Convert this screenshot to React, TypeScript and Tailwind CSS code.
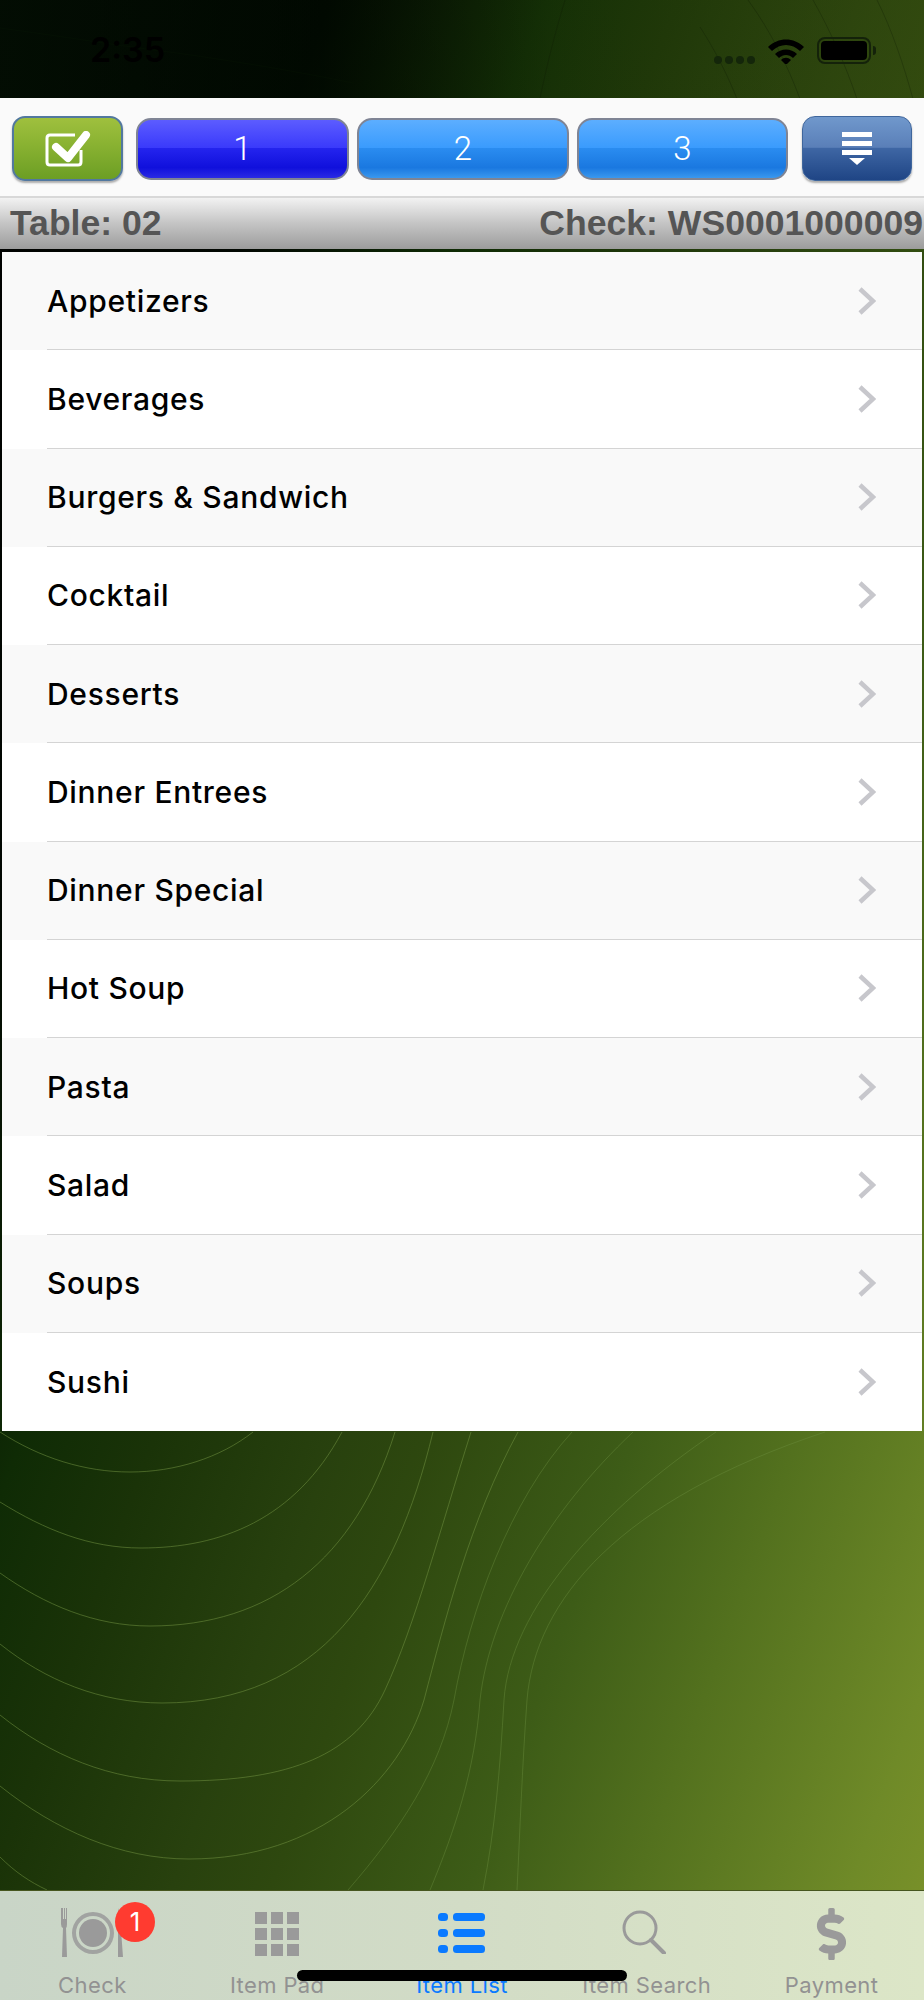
import React from "react";
import { FaDollarSign } from "react-icons/fa";

const categories = [
    "Appetizers",
    "Beverages",
    "Burgers & Sandwich",
    "Cocktail",
    "Desserts",
    "Dinner Entrees",
    "Dinner Special",
    "Hot Soup",
    "Pasta",
    "Salad",
    "Soups",
    "Sushi",
];

// contour lines of the wallpaper
const lowerLines = [
    "M0 1432 C40 1458 85 1472 130 1472 C175 1472 220 1458 253 1432",
    "M0 1502 C45 1530 90 1548 141 1548 C220 1548 295 1520 342 1432",
    "M0 1573 C45 1605 95 1626 150 1626 C270 1626 355 1560 395 1432",
    "M0 1644 C45 1680 100 1703 162 1703 C320 1703 395 1590 433 1432",
    "M0 1715 C50 1755 110 1781 180 1781 C290 1781 355 1755 385 1690 C415 1625 440 1530 471 1432",
    "M0 1786 C55 1830 120 1859 189 1859 C320 1859 400 1780 424 1700 C445 1620 470 1520 518 1432",
    "M0 1857 C15 1872 30 1882 47 1890",
];

const outerLines = [
    "M348 1890 C400 1830 440 1770 454 1700 C470 1610 510 1500 572 1432",
    "M430 1890 C455 1830 475 1770 480 1700 C490 1610 550 1510 633 1432",
    "M483 1890 C495 1830 500 1770 504 1700 C510 1610 600 1510 716 1432",
    "M517 1890 C520 1830 522 1770 527 1700 C535 1600 620 1500 825 1432",
];

const upperLines = [
    "M0 28 C60 36 120 46 177 53 C240 62 300 72 353 83",
    "M700 27 C715 50 728 76 737 99",
    "M748 0 C770 30 788 66 800 99",
    "M813 0 C830 30 846 66 857 99",
    "M877 0 C892 30 904 66 913 99",
    "M540 98 C548 60 556 30 565 0",
];

function CheckIcon() {
    return (
        <svg width="46" height="36" viewBox="0 0 46 36" fill="none">
            <path
                d="M30 4 H5 Q2 4 2 7 V31 Q2 34 5 34 H33 Q36 34 36 31 V19"
                stroke="white"
                strokeWidth="3"
            />
            <path
                d="M11 16 L23 27 L41 4"
                stroke="white"
                strokeWidth="8"
                strokeLinecap="round"
                strokeLinejoin="round"
            />
        </svg>
    );
}

function MenuIcon() {
    return (
        <svg width="30" height="33" viewBox="0 0 30 33" fill="white">
            <rect x="0" y="0" width="30" height="5" />
            <rect x="0" y="9" width="30" height="5" />
            <rect x="0" y="18" width="30" height="5" />
            <path d="M7 26 H23 L15 33 Z" />
        </svg>
    );
}

function PlateIcon() {
    return (
        <svg width="62" height="50" viewBox="0 0 62 50" fill="#9a9a9a">
            <path d="M1 0 H2 V11 H3 V0 H4 V11 H5 V0 H6 V16 Q6 19 5 20 L6 49 H1 L2 20 Q0 19 0 16 V0 Z" />
            <path
                fillRule="evenodd"
                d="M32 4 A21 21 0 1 0 32 46 A21 21 0 1 0 32 4 Z M32 8 A17 17 0 1 1 32 42 A17 17 0 1 1 32 8 Z"
                opacity="0.85"
            />
            <circle cx="32" cy="25" r="14" />
            <path d="M57 0 Q60 10 60 22 L62 49 H57 Z" />
        </svg>
    );
}

function GridIcon() {
    return (
        <div className="grid w-[44px] grid-cols-3 gap-[4px]">
            {Array.from({ length: 9 }).map((_, i) => (
                <div key={i} className="h-[12px] w-[12px] bg-[#9a9a9a]" />
            ))}
        </div>
    );
}

function ListIcon() {
    return (
        <svg width="47" height="41" viewBox="0 0 47 41" fill="#0a7aff">
            <rect x="0" y="0" width="10" height="8" rx="3.5" />
            <rect x="15" y="0" width="32" height="8" rx="3.5" />
            <rect x="0" y="16" width="10" height="8" rx="3.5" />
            <rect x="15" y="16" width="32" height="8" rx="3.5" />
            <rect x="0" y="32" width="10" height="8" rx="3.5" />
            <rect x="15" y="32" width="32" height="8" rx="3.5" />
        </svg>
    );
}

function SearchIcon() {
    return (
        <svg width="44" height="44" viewBox="0 0 44 44" fill="none" stroke="#9a9a9a">
            <circle cx="18" cy="18" r="16" strokeWidth="3" />
            <path d="M29 30 L42 43" strokeWidth="4" strokeLinecap="round" />
        </svg>
    );
}

function Chevron() {
    return (
        <svg width="18" height="28" viewBox="0 0 18 28" fill="none">
            <path d="M2 2 L15 14 L2 26" stroke="#c7c7cc" strokeWidth="4.5" />
        </svg>
    );
}

function NumberButton({ label, active, width }: { label: string; active?: boolean; width: string }) {
    return (
        <button
            type="button"
            className={`${width} h-[62px] rounded-[15px] border-2 border-[#7f8494] text-[33px] leading-none font-[350] text-white ${
                active
                    ? "bg-[linear-gradient(180deg,#5c5cff_0%,#3a3afb_48%,#2424ee_49%,#1010dc_82%,#2a2ae4_100%)]"
                    : "bg-[linear-gradient(180deg,#5caeff_0%,#3a9bfd_48%,#2a8cf0_49%,#1a78e0_82%,#3a98ee_100%)]"
            }`}
            style={{ fontFamily: "Roboto, sans-serif" }}
        >
            {label}
        </button>
    );
}

function TabItem({
    label,
    active,
    icon,
}: {
    label: string;
    active?: boolean;
    icon: React.ReactNode;
}) {
    return (
        <div className="relative flex flex-col items-center">
            <div className="flex h-[66px] items-start justify-center">{icon}</div>
            <span
                className={`text-[22px] leading-[26px] tracking-[0.4px] ${
                    active ? "text-[#0a7aff]" : "text-[#929292]"
                }`}
            >
                {label}
            </span>
        </div>
    );
}

export default function App() {
    return (
        <div
            className="relative flex h-[2000px] w-[924px] flex-col overflow-hidden bg-[linear-gradient(110deg,#000000_0%,#020802_20%,#0f2b05_33%,#1a3308_41%,#28410e_52%,#2e480f_58%,#3d5c17_70%,#53711e_80%,#6f8a28_93%,#7c932a_100%)]"
            style={{ fontFamily: "Inter, sans-serif" }}
        >
            <svg
                className="absolute inset-0"
                width="924"
                height="2000"
                viewBox="0 0 924 2000"
                fill="none"
            >
                {upperLines.map((d) => (
                    <path key={d} d={d} stroke="#0a1a04" strokeWidth="1" opacity="0.45" />
                ))}
                {lowerLines.map((d) => (
                    <path key={d} d={d} stroke="#6f9040" strokeWidth="1" opacity="0.55" />
                ))}
                {outerLines.map((d) => (
                    <path key={d} d={d} stroke="#6f9040" strokeWidth="1" opacity="0.4" />
                ))}
            </svg>

            {/* status bar, the wallpaper is lifted a little towards the right */}
            <div className="relative h-[98px] shrink-0 bg-[linear-gradient(90deg,rgba(4,18,4,0.7)_0%,rgba(0,10,0,0.5)_35%,rgba(60,80,14,0.12)_60%,rgba(60,80,14,0.3)_100%)]">
                <span className="absolute top-[30px] left-[90px] text-[34px] leading-[40px] font-semibold text-[#000000]">
                    2:35
                </span>
                <div className="absolute top-[56px] left-[714px] flex gap-[3px]">
                    {[0, 1, 2, 3].map((i) => (
                        <div key={i} className="h-[8px] w-[8px] rounded-full bg-[#14260a]" />
                    ))}
                </div>
                <svg className="absolute top-[36px] left-[767px]" width="38" height="28" viewBox="0 0 38 28">
                    <path
                        d="M1 11 C11 1 27 1 37 11 L33 15 C25 7 13 7 5 15 Z M8 18 C14 12 24 12 30 18 L26 22 C22 18 16 18 12 22 Z M14 24 C17 21 21 21 24 24 L19 29 Z"
                        fill="#000"
                    />
                </svg>
                <div className="absolute top-[37px] left-[817px] flex h-[27px] w-[54px] items-center justify-center rounded-[8px] border-[2px] border-[#14220a]">
                    <div className="h-[19px] w-[46px] rounded-[4px] bg-black" />
                </div>
                <div className="absolute top-[46px] left-[873px] h-[9px] w-[3px] rounded-r-full bg-[#14220a]" />
            </div>

            {/* toolbar */}
            <div className="relative flex h-[100px] shrink-0 items-center border-b-2 border-[#d8d8d8] bg-[#fafafa] pt-[3px] pl-[12px]">
                <button
                    type="button"
                    className="flex h-[65px] w-[111px] items-center justify-center rounded-[13px] border-2 border-[#52789f] bg-[linear-gradient(180deg,#9fc03e_0%,#86b030_50%,#6c9e24_100%)] shadow-[0_2px_2px_rgba(80,80,80,0.45)]"
                >
                    <CheckIcon />
                </button>
                <div className="ml-[13px] flex gap-[8px]">
                    <NumberButton label="1" active width="w-[213px]" />
                    <NumberButton label="2" width="w-[212px]" />
                    <NumberButton label="3" width="w-[211px]" />
                </div>
                <button
                    type="button"
                    className="ml-[14px] flex h-[65px] w-[110px] items-center justify-center rounded-[13px] border border-[#3f669c] bg-[linear-gradient(180deg,#7098cc_0%,#5a7fb8_48%,#3e66a4_50%,#1f4585_100%)] shadow-[0_2px_2px_rgba(80,80,80,0.45)]"
                >
                    <MenuIcon />
                </button>
            </div>

            {/* table and check numbers */}
            <div
                className="relative flex h-[51px] shrink-0 items-center justify-between bg-[linear-gradient(180deg,#f2f2f2_0%,#c4c4c4_50%,#9c9c9c_100%)] pr-[1px] pl-[10px] text-[35.6px] leading-none font-bold text-[#555555]"
                style={{ fontFamily: '"Liberation Sans", Arial, sans-serif' }}
            >
                <span>Table: 02</span>
                <span>Check: WS0001000009</span>
            </div>

            {/* category list */}
            <div className="relative mx-[2px] mt-[3px]">
                {categories.map((name, i) => (
                    <div
                        key={name}
                        className={`flex h-[98.25px] items-center ${i % 2 === 0 ? "bg-[#f9f9f9]" : "bg-white"}`}
                    >
                        <div
                            className={`ml-[45px] flex h-full flex-1 items-center justify-between pr-[46px] ${
                                i === categories.length - 1 ? "" : "border-b border-[#d4d4d4]"
                            }`}
                        >
                            <span className="mt-[1px] text-[30px] font-[550] tracking-[0.7px] text-black">{name}</span>
                            <Chevron />
                        </div>
                    </div>
                ))}
            </div>

            {/* tab bar */}
            <div className="relative mt-auto grid h-[110px] shrink-0 grid-cols-5 border-t border-[#46561f] bg-[linear-gradient(90deg,#c9d5c7_0%,#d2dcc6_50%,#dce6c7_100%)] pt-[15px]">
                <div className="relative">
                    <TabItem label="Check" icon={<div className="mt-[2px]"><PlateIcon /></div>} />
                    <div className="absolute top-[-4px] left-[115px] flex h-[40px] w-[40px] items-center justify-center rounded-full bg-[#ff3b30] text-[26px] leading-none text-white">
                        1
                    </div>
                </div>
                <TabItem label="Item Pad" icon={<div className="mt-[6px]"><GridIcon /></div>} />
                <TabItem label="Item List" active icon={<div className="mt-[7px]"><ListIcon /></div>} />
                <TabItem label="Item Search" icon={<div className="mt-[4px] -ml-[6px]"><SearchIcon /></div>} />
                <TabItem label="Payment" icon={<FaDollarSign className="mt-[2px] h-[52px] w-[33px] text-[#9a9a9a]" />} />
                <div className="absolute top-[79px] left-[297px] h-[11px] w-[330px] rounded-full bg-black" />
            </div>
        </div>
    );
}
